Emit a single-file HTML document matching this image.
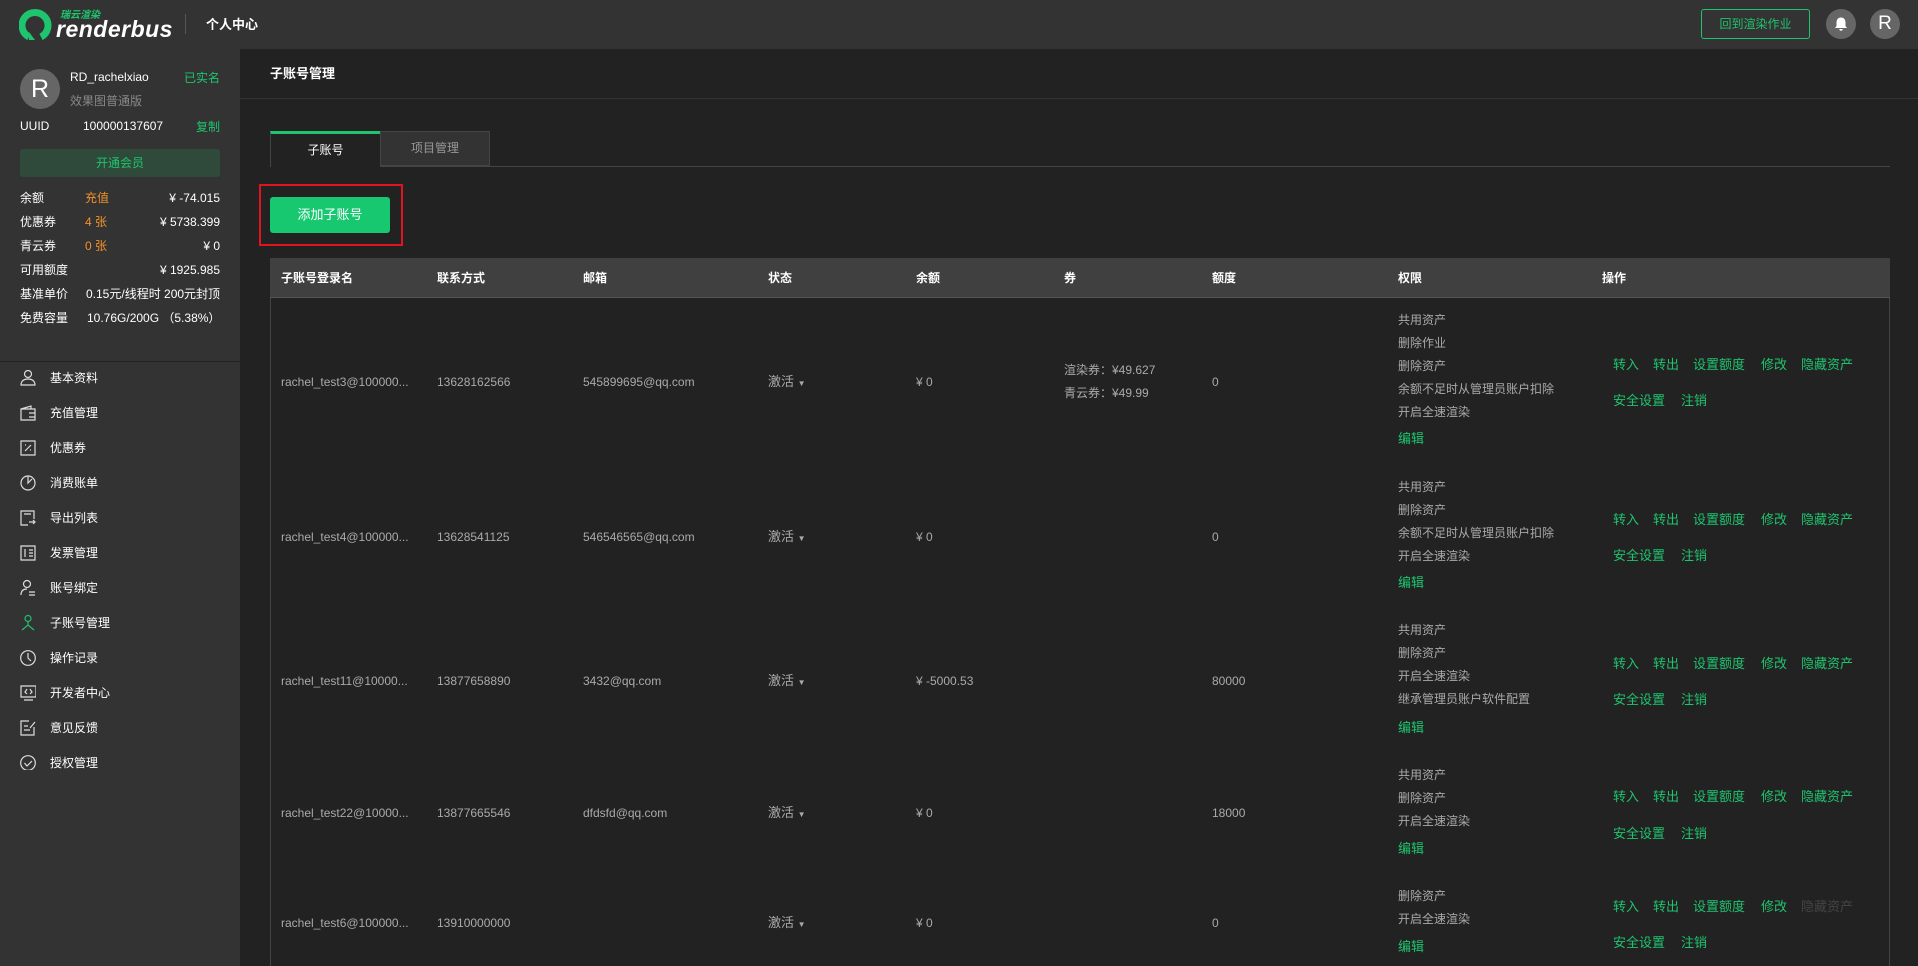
<!DOCTYPE html>
<html><head><meta charset="utf-8"><style>
*{margin:0;padding:0;box-sizing:border-box}
body{width:1918px;height:966px;overflow:hidden;background:#222;font-family:"Liberation Sans","Noto Sans CJK SC",sans-serif;color:#aaa;font-size:12px;position:relative}
.a{position:absolute;white-space:nowrap;line-height:16px}
.g{color:#1ec46e}
.w{color:#fff}
.o{color:#f0922b}
.hd{position:absolute;left:0;top:0;width:1918px;height:49px;background:#333}
.sb{position:absolute;left:0;top:49px;width:240px;height:917px;background:#333}
.th{color:#fff;font-weight:bold;font-size:12px}
.ac{color:#1ec46e;font-size:13px}
.mi{color:#fff;font-size:12px}
.ic{position:absolute;width:16px;height:16px}
</style></head><body>
<div class="hd"></div>
<svg class="ic" style="left:19px;top:8px;width:34px;height:33px" viewBox="0 0 34 33"><path d="M10 29 A13 13 0 1 1 22 29" fill="none" stroke="#1ec46e" stroke-width="7"/><path d="M10 24 L10 32 L16 32 Z" fill="#1ec46e"/></svg>
<div class="a g" style="left:60px;top:8px;font-size:10px;font-style:italic;font-weight:bold">瑞云渲染</div>
<div class="a w" style="left:56px;top:17px;font-size:23px;line-height:24px;font-style:italic;font-weight:bold;letter-spacing:0.5px">renderbus</div>
<div style="position:absolute;left:185px;top:14px;width:1px;height:20px;background:#555"></div>
<div class="a w" style="left:206px;top:17px;font-size:13px;font-weight:bold">个人中心</div>
<div style="position:absolute;left:1701px;top:9px;width:109px;height:30px;border:1px solid #1ec46e;border-radius:3px;color:#1ec46e;font-size:12px;line-height:28px;text-align:center">回到渲染作业</div>
<div style="position:absolute;left:1826px;top:9px;width:30px;height:30px;border-radius:50%;background:#666"></div>
<svg class="ic" style="left:1833px;top:16px" viewBox="0 0 16 16"><path d="M8 1.5c-3 0-4.5 2.3-4.5 5V10L2 12h12l-1.5-2V6.5c0-2.7-1.5-5-4.5-5z M6.3 13h3.4a1.7 1.7 0 0 1-3.4 0z" fill="#fff"/></svg>
<div style="position:absolute;left:1870px;top:9px;width:30px;height:30px;border-radius:50%;background:#666;color:#fff;font-size:19px;line-height:30px;text-align:center">R</div>

<div class="sb"></div>
<div style="position:absolute;left:20px;top:69px;width:40px;height:40px;border-radius:50%;background:#666;color:#fff;font-size:25px;line-height:40px;text-align:center">R</div>
<div class="a w" style="left:70px;top:69px">RD_rachelxiao</div>
<div class="a g" style="left:184px;top:70px">已实名</div>
<div class="a" style="left:70px;top:93px;color:#888">效果图普通版</div>
<div class="a w" style="left:20px;top:118px">UUID</div>
<div class="a w" style="left:83px;top:118px">100000137607</div>
<div class="a g" style="left:196px;top:119px">复制</div>
<div style="position:absolute;left:20px;top:149px;width:200px;height:28px;border-radius:3px;background:#2f4a3a;color:#1ec46e;line-height:28px;text-align:center;font-size:12px">开通会员</div>
<div class="a w" style="left:20px;top:190px">余额</div><div class="a o" style="left:85px;top:190px">充值</div><div class="a w" style="right:1698px;top:190px">¥ -74.015</div>
<div class="a w" style="left:20px;top:214px">优惠券</div><div class="a o" style="left:85px;top:214px">4 张</div><div class="a w" style="right:1698px;top:214px">¥ 5738.399</div>
<div class="a w" style="left:20px;top:238px">青云券</div><div class="a o" style="left:85px;top:238px">0 张</div><div class="a w" style="right:1698px;top:238px">¥ 0</div>
<div class="a w" style="left:20px;top:262px">可用额度</div><div class="a w" style="right:1698px;top:262px">¥ 1925.985</div>
<div class="a w" style="left:20px;top:286px">基准单价</div><div class="a w" style="left:86px;top:286px">0.15元/线程时 200元封顶</div>
<div class="a w" style="left:20px;top:310px">免费容量</div><div class="a w" style="left:87px;top:310px">10.76G/200G （5.38%）</div>
<div style="position:absolute;left:0;top:361px;width:240px;height:1px;background:#222"></div>

<svg style="position:absolute;left:20px;top:370px" width="16" height="400" viewBox="0 0 16 400" fill="none" stroke="#ddd" stroke-width="1.2">
<circle cx="8" cy="4" r="3.5"/><path d="M1 15c0-4 3-6 7-6s7 2 7 6z"/>
<g transform="translate(0,35)"><path d="M1 4h14v11H1z M1 4l10-3v3 M9 8h6v4H9"/></g>
<g transform="translate(0,70)"><path d="M1 1h14v14H1z M5 11l6-6 M5 5h1 M10 10h1"/></g>
<g transform="translate(0,105)"><circle cx="8" cy="8" r="7"/><path d="M8 1v7l4-4"/></g>
<g transform="translate(0,140)"><path d="M14 9V1H1v14h7 M4 4h7 M9 12h6 M13 10l2 2-2 2"/></g>
<g transform="translate(0,175)"><path d="M1 1h14v14H1z M9 5h4 M9 8h4 M9 11h4 M5 4v8"/></g>
<g transform="translate(0,210)"><circle cx="7" cy="4" r="3.5"/><path d="M1 15c0-4 2-6 6-6 M9 12h6 M9 15h6"/></g>
<g transform="translate(0,245)" stroke="#1ec46e"><circle cx="8" cy="3.5" r="3"/><path d="M8 7v3 M2 15l6-5 6 5"/></g>
<g transform="translate(0,280)"><circle cx="8" cy="8" r="7.3"/><path d="M8 3v5l3 3"/></g>
<g transform="translate(0,315)"><path d="M1 1h15v11H1z M4 15h9 M7 4l-2 3 2 2 M10 4l2 3-2 2"/></g>
<g transform="translate(0,350)"><path d="M14 7v8H1V1h8 M4 6h4 M4 10h6 M10 8l5-6"/></g>
<g transform="translate(0,385)"><circle cx="8" cy="8" r="7.3"/><path d="M4.5 8l2.5 3 5-5"/></g>
</svg>
<div class="a mi" style="left:50px;top:370px">基本资料</div>
<div class="a mi" style="left:50px;top:405px">充值管理</div>
<div class="a mi" style="left:50px;top:440px">优惠券</div>
<div class="a mi" style="left:50px;top:475px">消费账单</div>
<div class="a mi" style="left:50px;top:510px">导出列表</div>
<div class="a mi" style="left:50px;top:545px">发票管理</div>
<div class="a mi" style="left:50px;top:580px">账号绑定</div>
<div class="a mi g" style="left:50px;top:615px">子账号管理</div>
<div class="a mi" style="left:50px;top:650px">操作记录</div>
<div class="a mi" style="left:50px;top:685px">开发者中心</div>
<div class="a mi" style="left:50px;top:720px">意见反馈</div>
<div class="a mi" style="left:50px;top:755px">授权管理</div>

<div class="a w" style="left:270px;top:66px;font-size:13px;font-weight:bold">子账号管理</div>
<div style="position:absolute;left:240px;top:98px;width:1678px;height:1px;background:#333"></div>
<div style="position:absolute;left:270px;top:166px;width:1620px;height:1px;background:#444"></div>
<div style="position:absolute;left:270px;top:131px;width:110px;height:36px;background:#222;border-top:3px solid #1ec46e;border-left:1px solid #444;color:#fff;text-align:center;line-height:33px">子账号</div>
<div style="position:absolute;left:380px;top:131px;width:110px;height:35px;background:#333;border:1px solid #444;color:#999;text-align:center;line-height:33px">项目管理</div>
<div style="position:absolute;left:259px;top:184px;width:144px;height:62px;border:2px solid #e0141e"></div>
<div style="position:absolute;left:270px;top:197px;width:120px;height:36px;background:#17c871;border-radius:3px;color:#fff;text-align:center;line-height:36px;font-size:13px">添加子账号</div>

<div style="position:absolute;left:270px;top:258px;width:1620px;height:40px;background:#404040;border-bottom:1px solid #555"></div>
<div style="position:absolute;left:270px;top:298px;width:1px;height:668px;background:#444"></div>
<div style="position:absolute;left:1889px;top:298px;width:1px;height:668px;background:#444"></div>
<div class="a th" style="left:281px;top:270px">子账号登录名</div>
<div class="a th" style="left:437px;top:270px">联系方式</div>
<div class="a th" style="left:583px;top:270px">邮箱</div>
<div class="a th" style="left:768px;top:270px">状态</div>
<div class="a th" style="left:916px;top:270px">余额</div>
<div class="a th" style="left:1064px;top:270px">券</div>
<div class="a th" style="left:1212px;top:270px">额度</div>
<div class="a th" style="left:1398px;top:270px">权限</div>
<div class="a th" style="left:1602px;top:270px">操作</div>

<!-- row1 -->
<div class="a" style="left:281px;top:374px">rachel_test3@100000...</div>
<div class="a" style="left:437px;top:374px">13628162566</div>
<div class="a" style="left:583px;top:374px">545899695@qq.com</div>
<div class="a" style="left:768px;top:374px;font-size:13px">激活 <span style="font-size:8px">▼</span></div>
<div class="a" style="left:916px;top:374px">¥ 0</div>
<div class="a" style="left:1064px;top:362px">渲染券：¥49.627</div>
<div class="a" style="left:1064px;top:385px">青云券：¥49.99</div>
<div class="a" style="left:1212px;top:374px">0</div>
<div class="a" style="left:1398px;top:309px;line-height:23px">共用资产<br>删除作业<br>删除资产<br>余额不足时从管理员账户扣除<br>开启全速渲染</div>
<div class="a ac" style="left:1398px;top:431px">编辑</div>
<div class="a ac" style="left:1613px;top:357px">转入</div><div class="a ac" style="left:1653px;top:357px">转出</div><div class="a ac" style="left:1693px;top:357px">设置额度</div><div class="a ac" style="left:1761px;top:357px">修改</div><div class="a ac" style="left:1801px;top:357px">隐藏资产</div>
<div class="a ac" style="left:1613px;top:393px">安全设置</div><div class="a ac" style="left:1681px;top:393px">注销</div>

<!-- row2 -->
<div class="a" style="left:281px;top:529px">rachel_test4@100000...</div>
<div class="a" style="left:437px;top:529px">13628541125</div>
<div class="a" style="left:583px;top:529px">546546565@qq.com</div>
<div class="a" style="left:768px;top:529px;font-size:13px">激活 <span style="font-size:8px">▼</span></div>
<div class="a" style="left:916px;top:529px">¥ 0</div>
<div class="a" style="left:1212px;top:529px">0</div>
<div class="a" style="left:1398px;top:476px;line-height:23px">共用资产<br>删除资产<br>余额不足时从管理员账户扣除<br>开启全速渲染</div>
<div class="a ac" style="left:1398px;top:575px">编辑</div>
<div class="a ac" style="left:1613px;top:512px">转入</div><div class="a ac" style="left:1653px;top:512px">转出</div><div class="a ac" style="left:1693px;top:512px">设置额度</div><div class="a ac" style="left:1761px;top:512px">修改</div><div class="a ac" style="left:1801px;top:512px">隐藏资产</div>
<div class="a ac" style="left:1613px;top:548px">安全设置</div><div class="a ac" style="left:1681px;top:548px">注销</div>

<!-- row3 -->
<div class="a" style="left:281px;top:673px">rachel_test11@10000...</div>
<div class="a" style="left:437px;top:673px">13877658890</div>
<div class="a" style="left:583px;top:673px">3432@qq.com</div>
<div class="a" style="left:768px;top:673px;font-size:13px">激活 <span style="font-size:8px">▼</span></div>
<div class="a" style="left:916px;top:673px">¥ -5000.53</div>
<div class="a" style="left:1212px;top:673px">80000</div>
<div class="a" style="left:1398px;top:619px;line-height:23px">共用资产<br>删除资产<br>开启全速渲染<br>继承管理员账户软件配置</div>
<div class="a ac" style="left:1398px;top:720px">编辑</div>
<div class="a ac" style="left:1613px;top:656px">转入</div><div class="a ac" style="left:1653px;top:656px">转出</div><div class="a ac" style="left:1693px;top:656px">设置额度</div><div class="a ac" style="left:1761px;top:656px">修改</div><div class="a ac" style="left:1801px;top:656px">隐藏资产</div>
<div class="a ac" style="left:1613px;top:692px">安全设置</div><div class="a ac" style="left:1681px;top:692px">注销</div>

<!-- row4 -->
<div class="a" style="left:281px;top:805px">rachel_test22@10000...</div>
<div class="a" style="left:437px;top:805px">13877665546</div>
<div class="a" style="left:583px;top:805px">dfdsfd@qq.com</div>
<div class="a" style="left:768px;top:805px;font-size:13px">激活 <span style="font-size:8px">▼</span></div>
<div class="a" style="left:916px;top:805px">¥ 0</div>
<div class="a" style="left:1212px;top:805px">18000</div>
<div class="a" style="left:1398px;top:764px;line-height:23px">共用资产<br>删除资产<br>开启全速渲染</div>
<div class="a ac" style="left:1398px;top:841px">编辑</div>
<div class="a ac" style="left:1613px;top:789px">转入</div><div class="a ac" style="left:1653px;top:789px">转出</div><div class="a ac" style="left:1693px;top:789px">设置额度</div><div class="a ac" style="left:1761px;top:789px">修改</div><div class="a ac" style="left:1801px;top:789px">隐藏资产</div>
<div class="a ac" style="left:1613px;top:826px">安全设置</div><div class="a ac" style="left:1681px;top:826px">注销</div>

<!-- row5 -->
<div class="a" style="left:281px;top:915px">rachel_test6@100000...</div>
<div class="a" style="left:437px;top:915px">13910000000</div>
<div class="a" style="left:768px;top:915px;font-size:13px">激活 <span style="font-size:8px">▼</span></div>
<div class="a" style="left:916px;top:915px">¥ 0</div>
<div class="a" style="left:1212px;top:915px">0</div>
<div class="a" style="left:1398px;top:885px;line-height:23px">删除资产<br>开启全速渲染</div>
<div class="a ac" style="left:1398px;top:939px">编辑</div>
<div class="a ac" style="left:1613px;top:899px">转入</div><div class="a ac" style="left:1653px;top:899px">转出</div><div class="a ac" style="left:1693px;top:899px">设置额度</div><div class="a ac" style="left:1761px;top:899px">修改</div><div class="a ac" style="left:1801px;top:899px;color:#444">隐藏资产</div>
<div class="a ac" style="left:1613px;top:935px">安全设置</div><div class="a ac" style="left:1681px;top:935px">注销</div>
</body></html>
